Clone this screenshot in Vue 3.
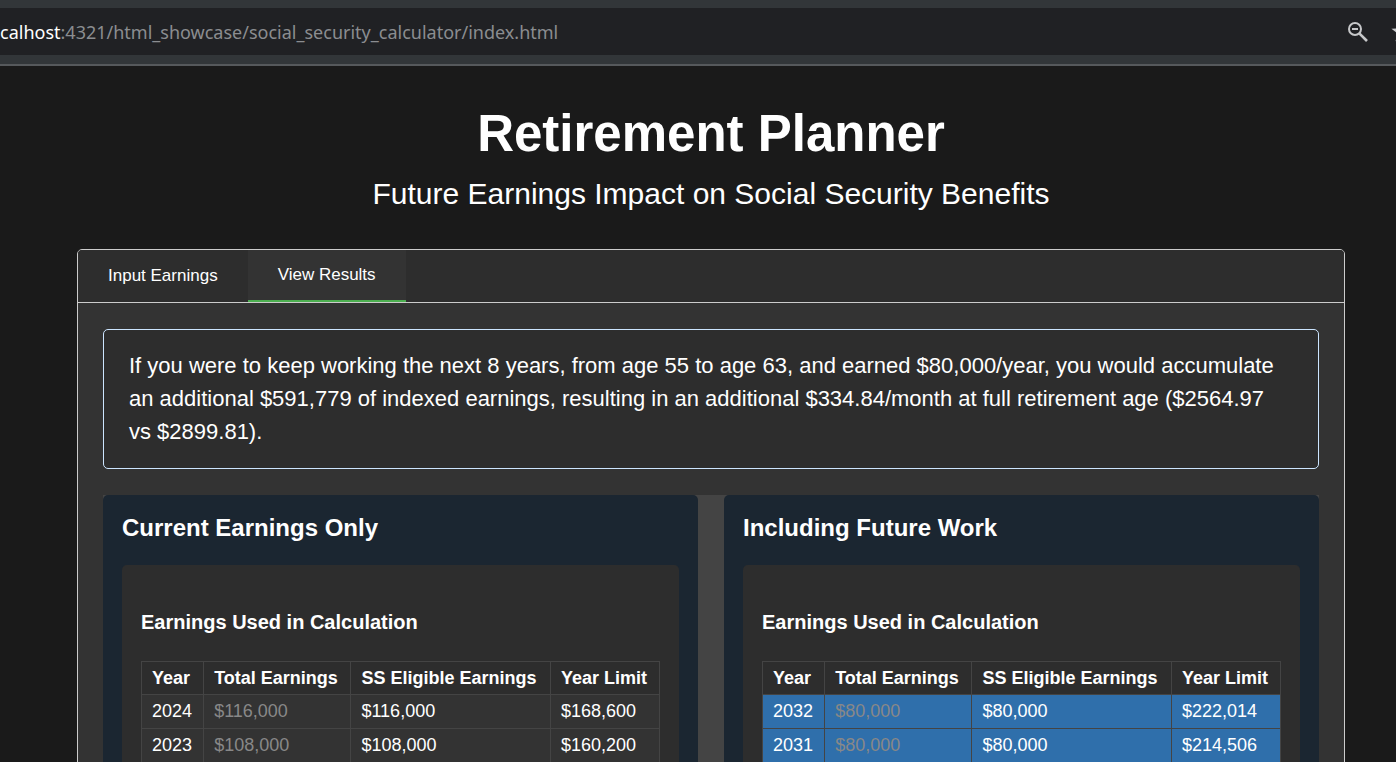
<script setup>
import { ref } from 'vue'

const active = ref('results')
const columns = ['Year', 'Total Earnings', 'SS Eligible Earnings', 'Year Limit']

const scenarios = [
  {
    title: 'Current Earnings Only',
    future: false,
    rows: [
      ['2024', '$116,000', '$116,000', '$168,600'],
      ['2023', '$108,000', '$108,000', '$160,200'],
    ],
  },
  {
    title: 'Including Future Work',
    future: true,
    rows: [
      ['2032', '$80,000', '$80,000', '$222,014'],
      ['2031', '$80,000', '$80,000', '$214,506'],
    ],
  },
]
</script>

<template>
  <div class="window">
    <header class="browser-bar">
      <div class="address">
        <span class="url"><span class="host">calhost</span>:4321/html_showcase/social_security_calculator/index.html</span>
        <div class="actions">
          <button class="icon-button" type="button" aria-label="Zoom">
            <svg width="22" height="22" viewBox="0 0 22 22" fill="none" stroke="#c7c8ca">
              <circle cx="8" cy="8" r="6" stroke-width="2" />
              <path d="M5 8h6" stroke-width="2" />
              <path d="M12.3 12.3L20 20" stroke-width="2.6" />
            </svg>
          </button>
          <button class="icon-button" type="button" aria-label="Bookmark">
            <svg width="22" height="22" viewBox="0 0 22 22" fill="#c7c8ca">
              <path d="M11 0l2.600 7.400 8 .3-6.300 4.900 2.200 7.700L11 15.900l-6.500 4.400 2.200-7.700L.4 7.700l8-.3z" />
            </svg>
          </button>
        </div>
      </div>
    </header>

    <main class="page">
      <h1>Retirement Planner</h1>
      <p class="subtitle">Future Earnings Impact on Social Security Benefits</p>

      <section class="card">
        <nav class="tabs">
          <button type="button" :class="{ active: active === 'input' }" @click="active = 'input'">Input Earnings</button>
          <button type="button" :class="{ active: active === 'results' }" @click="active = 'results'">View Results</button>
        </nav>

        <div class="content">
          <p class="summary">
            If you were to keep working the next 8 years, from age 55 to age 63, and earned $80,000/year, you would
            accumulate an additional $591,779 of indexed earnings, resulting in an additional $334.84/month at full
            retirement age ($2564.97 vs&nbsp;$2899.81).
          </p>

          <div class="comparison">
            <section v-for="s in scenarios" :key="s.title" class="scenario">
              <h2>{{ s.title }}</h2>
              <div class="panel">
                <h3>Earnings Used in Calculation</h3>
                <table :class="{ future: s.future }">
                  <thead>
                    <tr>
                      <th v-for="c in columns" :key="c" scope="col">{{ c }}</th>
                    </tr>
                  </thead>
                  <tbody>
                    <tr v-for="row in s.rows" :key="row[0]">
                      <td v-for="(cell, i) in row" :key="i" :class="{ muted: i === 1 }">{{ cell }}</td>
                    </tr>
                  </tbody>
                </table>
              </div>
            </section>
          </div>
        </div>
      </section>
    </main>
  </div>
</template>

<style>
body {
  margin: 0;
  background: #1a1a1a;
}
</style>

<style scoped>
.window {
  height: 100vh;
  overflow: hidden;
  color: #fff;
  background: #1a1a1a;
  font-family: "Liberation Sans", Arial, sans-serif;
}

.browser-bar {
  padding: 8px 0 9px;
  background: #323639;
  border-bottom: 2px solid #56595c;
}

.address {
  display: flex;
  align-items: center;
  justify-content: space-between;
  height: 47px;
  overflow: hidden;
  background: #202124;
}

.url {
  color: #8b8d90;
  font: 18px/28px "Noto Sans", "Open Sans", sans-serif;
  white-space: nowrap;
}

.host {
  color: #fff;
}

.actions {
  display: flex;
  gap: 22px;
  margin-right: -17px;
}

.icon-button {
  display: flex;
  padding: 0;
  border: 0;
  background: none;
}

.page {
  padding: 39px 51px 0 77px;
}

h1 {
  margin: 0;
  font-size: 51px;
  line-height: 58px;
  text-align: center;
}

.subtitle {
  margin: 13px 0 38px;
  font-size: 30px;
  line-height: 35px;
  text-align: center;
}

.card {
  overflow: hidden;
  border: 1px solid #ccc;
  border-radius: 5px;
  background: #333;
}

.tabs {
  display: flex;
  height: 52px;
  border-bottom: 1px solid #ccc;
  background: #2d2d2d;
}

.tabs button {
  padding: 0 30px;
  border: 0;
  background: none;
  color: #fff;
  font: 17px/20px "Liberation Sans", Arial, sans-serif;
}

.tabs .active {
  border-bottom: 2px solid #4caf50;
  background: #333;
}

.content {
  padding: 26px 25px;
}

.summary {
  margin: 0 0 26px;
  padding: 19px 25px 20px;
  border: 1px solid #cce5ff;
  border-radius: 5px;
  background: #2d2d2d;
  font-size: 22px;
  line-height: 33px;
}

.comparison {
  display: grid;
  grid-template-columns: 1fr 1fr;
  gap: 26px;
  background: #444;
}

.scenario {
  padding: 19px;
  border-radius: 5px;
  background: #1b2631;
}

h2 {
  margin: 0 0 23px;
  font-size: 24px;
  line-height: 28px;
}

.panel {
  padding: 45px 19px 19px;
  border-radius: 5px;
  background: #2d2d2d;
}

h3 {
  margin: 0 0 27px;
  font-size: 20px;
  line-height: 24px;
}

table {
  width: 100%;
  border-collapse: collapse;
  font-size: 18px;
}

th,
td {
  padding: 6px 10px;
  border: 1px solid #444;
  line-height: 21px;
  text-align: left;
  white-space: nowrap;
}

th {
  line-height: 20px;
}

tbody tr {
  background: #333;
}

.future tbody tr {
  background: #2f6fab;
}

.muted {
  color: #888;
}
</style>
